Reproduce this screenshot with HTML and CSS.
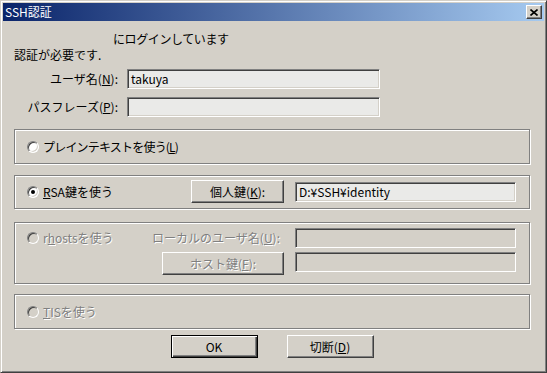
FILE: index.html
```html
<!DOCTYPE html>
<html lang="ja">
<head>
<meta charset="utf-8">
<title>SSH認証</title>
<link rel="stylesheet" href="styles.css">
</head>
<body>
<div class="window">
  <div class="titlebar">
    <span class="title">SSH認証</span>
    <span class="close"><svg width="8" height="7" viewBox="0 0 8 7"><path d="M0.5 0.5L7.5 6.5M7.5 0.5L0.5 6.5" stroke="#000" stroke-width="1.6" fill="none"/></svg></span>
  </div>
  <div class="content">
    <div class="intro">
      <div class="line1">にログインしています</div>
      <div class="line2">認証が必要です.</div>
    </div>
    <div class="form-row first"><span class="lbl">ユーザ名(<u>N</u>):</span><div class="field">takuya</div></div>
    <div class="form-row second"><span class="lbl">パスフレーズ(<u>P</u>):</span><div class="field"></div></div>

    <div class="group g-plain">
      <div class="opt"><span class="radio"></span><span class="tight">プレインテキストを使う(<u>L</u>)</span></div>
    </div>

    <div class="group g-rsa">
      <div class="left">
        <div class="opt"><span class="radio checked"></span><span><u>R</u>SA鍵を使う</span></div>
        <button class="btn btn-key">個人鍵(<u>K</u>):</button>
      </div>
      <div class="field">D:¥SSH¥identity</div>
    </div>

    <div class="group g-rhosts">
      <div class="left">
        <div class="opt disabled"><span class="radio off"></span><span>r<u>h</u>ostsを使う</span></div>
        <span class="dlabel disabled">ローカルのユーザ名(<u>U</u>):</span>
      </div>
      <div class="field off"></div>
      <div class="left end">
        <button class="btn btn-host disabled">ホスト鍵(<u>F</u>):</button>
      </div>
      <div class="field off"></div>
    </div>

    <div class="group g-tis">
      <div class="opt disabled"><span class="radio off"></span><span><u>T</u>ISを使う</span></div>
    </div>

    <div class="buttons">
      <button class="btn btn-dlg btn-default">OK</button>
      <button class="btn btn-dlg">切断(<u>D</u>)</button>
    </div>
  </div>
</div>
</body>
</html>
```

FILE: styles.css
```css
* { box-sizing: border-box; }
html, body { margin: 0; padding: 0; }
body {
  width: 547px;
  height: 373px;
  overflow: hidden;
  background: #D4D0C8;
  font-family: "Noto Sans CJK JP", "Noto Sans", sans-serif;
  font-size: 12px;
  color: #000;
}
u { text-decoration: underline; text-underline-offset: 1px; }

.window {
  width: 547px;
  height: 373px;
  background: #D4D0C8;
  border: 1px solid;
  border-color: #D4D0C8 #404040 #404040 #D4D0C8;
  box-shadow: inset 1px 1px #fff, inset -1px -1px #808080;
  padding: 2px;
  display: flex;
  flex-direction: column;
}

.titlebar {
  flex: none;
  height: 18px;
  background: linear-gradient(to right, #0A246A, #A6CAF0);
  display: flex;
  align-items: center;
  justify-content: space-between;
  padding: 0 2px 0 2px;
  color: #fff;
}
.title { line-height: 14px; }
.close {
  width: 16px;
  height: 14px;
  background: #D4D0C8;
  border: 1px solid;
  border-color: #fff #404040 #404040 #fff;
  box-shadow: inset -1px -1px #808080;
  display: flex;
  align-items: center;
  justify-content: center;
}
.close svg { display: block; }

.content {
  flex: 1;
  display: flex;
  flex-direction: column;
  padding: 0 14px 0 11px;
}

.intro { margin-top: 11px; line-height: 14px; }
.line1 { margin-left: 99px; letter-spacing: -0.4px; }
.line2 { margin-top: 2px; }

.form-row {
  display: flex;
  align-items: center;
  height: 20px;
}
.form-row.first { margin-top: 7px; }
.form-row.second { margin-top: 8px; }
.lbl {
  width: 104px;
  text-align: right;
  margin-right: 9px;
  line-height: 14px;
  white-space: nowrap;
}

.field {
  height: 20px;
  width: 221px;
  background: #EAEAE8;
  border: 1px solid;
  border-color: #808080 #fff #fff #808080;
  box-shadow: inset 1px 1px #404040, inset -1px -1px #D4D0C8;
  padding: 0 3px;
  display: flex;
  align-items: center;
  line-height: 14px;
  white-space: nowrap;
}
.form-row .field { width: 253px; }
.field.off { background: #D4D0C8; }

.group {
  border: 1px solid #808080;
  box-shadow: inset 1px 1px #fff, 1px 1px #fff;
  padding: 0 13px 0 12px;
}
.g-plain {
  margin-top: 12px;
  height: 35px;
  display: flex;
  align-items: center;
}
.g-rsa {
  margin-top: 11px;
  padding-top: 4px;
  padding-bottom: 5px;
  display: grid;
  grid-template-columns: 1fr 221px;
  column-gap: 11px;
  align-items: center;
}
.g-rhosts {
  margin-top: 13px;
  padding-top: 5px;
  padding-bottom: 8px;
  display: grid;
  grid-template-columns: 1fr 221px;
  column-gap: 11px;
  row-gap: 4px;
  align-items: start;
}
.g-tis {
  margin-top: 10px;
  height: 35px;
  display: flex;
  align-items: center;
}

.left {
  display: flex;
  justify-content: space-between;
  align-items: center;
  min-height: 20px;
}
.left.end { justify-content: flex-end; }

.opt {
  display: flex;
  align-items: center;
  gap: 4px;
  line-height: 14px;
  white-space: nowrap;
}
.tight { letter-spacing: -0.8px; }
.radio {
  flex: none;
  position: relative;
  width: 12px;
  height: 12px;
  border-radius: 50%;
  background: #fff;
  border: 1px solid;
  border-color: #808080 #fff #fff #808080;
  box-shadow: inset 1px 1px #404040, inset -1px -1px #D4D0C8;
}
.radio.off { background: #D4D0C8; }
.radio.checked::after {
  content: "";
  position: absolute;
  left: 3px;
  top: 3px;
  width: 4px;
  height: 4px;
  border-radius: 50%;
  background: #000;
}

.disabled { color: #808080; text-shadow: 1px 1px 0 #fff; }
.dlabel { margin-right: 4px; line-height: 14px; white-space: nowrap; }

.btn {
  font-family: inherit;
  font-size: 12px;
  color: #000;
  background: #D4D0C8;
  border: 1px solid;
  border-color: #fff #404040 #404040 #fff;
  box-shadow: inset -1px -1px #808080;
  height: 23px;
  padding: 0;
  line-height: 14px;
  white-space: nowrap;
}
.btn.disabled { color: #808080; text-shadow: 1px 1px 0 #fff; }
.btn-key { width: 93px; }
.btn-host { width: 122px; }

.buttons {
  margin-top: 6px;
  display: flex;
  justify-content: center;
  gap: 29px;
}
.btn-dlg { width: 87px; }
.btn-default {
  border: 1px solid #000;
  box-shadow: inset 1px 1px #fff, inset -1px -1px #404040, inset -2px -2px #808080;
}
```
